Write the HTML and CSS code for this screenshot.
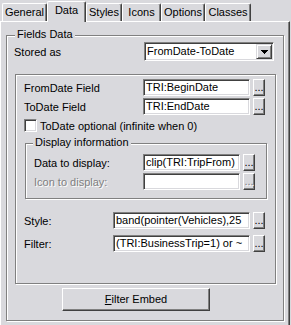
FILE: index.html
```html
<!DOCTYPE html>
<html lang="en">
<head>
    <meta charset="UTF-8">
    <title>Data</title>
    <link rel="stylesheet" href="styles.css">
</head>
<body>

<div class="dialog">
    <!-- Tab strip -->
    <div class="tabs">
        <div class="tab tab-general">General</div>
        <div class="tab tab-data active">Data</div>
        <div class="tab tab-styles">Styles</div>
        <div class="tab tab-icons">Icons</div>
        <div class="tab tab-options">Options</div>
        <div class="tab tab-classes">Classes</div>
    </div>

    <div class="panel">
        <div class="group fields">
            <span class="group-title">Fields Data</span>

            <div class="row stored">
                <span class="lab">Stored as</span>
                <div class="field select">
                    <span class="select-text">FromDate-ToDate</span>
                    <span class="drop">
                        <svg width="7" height="4" viewBox="0 0 7 4" shape-rendering="crispEdges"><path d="M0 0h7v1h-1v1h-1v1h-1v1h-1v-1h-1v-1h-1v-1h-1z" fill="#000"/></svg>
                    </span>
                </div>
            </div>

            <div class="box">
                <div class="row">
                    <span class="lab lab-main">FromDate Field</span>
                    <div class="field field-main">TRI:BeginDate</div>
                    <div class="btn dots">...</div>
                </div>
                <div class="row gap2">
                    <span class="lab lab-main">ToDate Field</span>
                    <div class="field field-main">TRI:EndDate</div>
                    <div class="btn dots">...</div>
                </div>
                <div class="row check-row">
                    <span class="check"></span>
                    <span class="check-text">ToDate optional (infinite when 0)</span>
                </div>

                <div class="group display">
                    <span class="group-title">Display information</span>
                    <div class="row">
                        <span class="lab lab-disp">Data to display:</span>
                        <div class="field field-disp">clip(TRI:TripFrom)</div>
                        <div class="btn dots">...</div>
                    </div>
                    <div class="row gap2">
                        <span class="lab lab-disp disabled">Icon to display:</span>
                        <div class="field field-disp"></div>
                        <div class="btn dots disabled">...</div>
                    </div>
                </div>

                <div class="row style-row">
                    <span class="lab lab-short">Style:</span>
                    <div class="field field-wide">band(pointer(Vehicles),25</div>
                    <div class="btn dots">...</div>
                </div>
                <div class="row filter-row">
                    <span class="lab lab-short">Filter:</span>
                    <div class="field field-wide">(TRI:BusinessTrip=1) or ~</div>
                    <div class="btn dots">...</div>
                </div>
            </div>

            <div class="btn embed"><u>F</u>ilter Embed</div>
        </div>
    </div>
</div>

</body>
</html>
```

FILE: styles.css
```css
body {
    margin: 0;
    background: #d9d9dd;
    font-family: "Liberation Sans", Arial, sans-serif;
    font-size: 11px;
    color: #000;
}
.dialog {
    width: 291px;
    height: 325px;
    overflow: hidden;
}

/* tabs */
.tabs {
    display: flex;
    align-items: flex-end;
    height: 21px;
    padding-left: 2px;
}
.tab {
    box-sizing: border-box;
    height: 18px;
    padding-top: 2px;
    text-align: center;
    line-height: 13px;
    border: 1px solid;
    border-color: #fff #404040 transparent #fff;
    border-bottom: 0;
    border-radius: 2px 2px 0 0;
    box-shadow: inset -1px 0 #808080;
    background: #d9d9dd;
}
.tab.active {
    height: 21px;
    margin-bottom: -1px;
    position: relative;
    z-index: 1;
}
.tab-general { width: 45px; }
.tab-data { width: 39px; }
.tab-styles { width: 36px; }
.tab-icons { width: 39px; }
.tab-options { width: 44px; }
.tab-classes { width: 46px; }

.panel {
    box-sizing: border-box;
    width: 290px;
    height: 310px;
    padding: 13px 0 0 5px;
    border-top: 1px solid #fff;
    border-left: 1px solid #fff;
    border-right: 1px solid #404040;
    box-shadow: inset -1px 0 #808080;
}

/* etched group boxes */
.group {
    position: relative;
    box-sizing: border-box;
    border: 1px solid #808080;
    box-shadow: inset 1px 1px #fff, 1px 1px #fff;
}
.group-title {
    position: absolute;
    top: -8px;
    left: 8px;
    padding: 0 2px;
    line-height: 13px;
    background: #d9d9dd;
}
.fields {
    width: 278px;
    padding-bottom: 9px;
}
.display {
    width: 242px;
    height: 56px;
    margin: 11px 0 0 1px;
    padding: 10px 0 0 8px;
}
.display .group-title {
    left: 7px;
}

.box {
    box-sizing: border-box;
    width: 261px;
    height: 210px;
    margin: 13px 0 0 8px;
    padding: 4px 0 0 8px;
    border: 1px solid #808080;
    box-shadow: inset 1px 1px #fff, 1px 1px #fff;
}

/* rows */
.row {
    display: flex;
    align-items: center;
    height: 17px;
}
.gap2 { margin-top: 2px; }
.stored {
    height: 19px;
    margin: 6px 0 0 7px;
}
.stored .lab { width: 130px; }
.lab-main { width: 119px; }
.lab-disp { width: 109px; }
.lab-short { width: 89px; }
.style-row { margin-top: 13px; }
.filter-row { margin-top: 6px; }

.disabled {
    color: #808080;
    text-shadow: 1px 1px #fff;
}

/* sunken fields */
.field {
    box-sizing: border-box;
    height: 17px;
    padding: 0 2px;
    line-height: 15px;
    white-space: nowrap;
    overflow: hidden;
    background: #fff;
    border: 1px solid;
    border-color: #808080 #fff #fff #808080;
    box-shadow: inset 1px 1px #404040, inset -1px -1px #d9d9dd;
}
.field-main { width: 107px; }
.field-disp { width: 97px; }
.field-wide { width: 137px; }

.select {
    display: flex;
    align-items: center;
    width: 130px;
    height: 19px;
    padding: 0 1px 0 2px;
}
.select-text {
    flex: 1;
}
.drop {
    box-sizing: border-box;
    display: flex;
    align-items: center;
    justify-content: center;
    width: 16px;
    height: 15px;
    background: #d9d9dd;
    border: 1px solid;
    border-color: #d9d9dd #404040 #404040 #d9d9dd;
    box-shadow: inset 1px 1px #fff, inset -1px -1px #808080;
}

/* raised buttons */
.btn {
    box-sizing: border-box;
    text-align: center;
    background: #d9d9dd;
    border: 1px solid;
    border-color: #fff #404040 #404040 #fff;
    box-shadow: inset -1px -1px #808080;
}
.dots {
    width: 12px;
    height: 17px;
    margin-left: 3px;
    line-height: 15px;
}
.embed {
    width: 148px;
    height: 23px;
    margin: 4px 0 0 55px;
    line-height: 21px;
}

/* checkbox */
.check-row {
    height: 13px;
    margin-top: 4px;
}
.check {
    box-sizing: border-box;
    width: 13px;
    height: 13px;
    background: #fff;
    border: 1px solid;
    border-color: #808080 #fff #fff #808080;
    box-shadow: inset 1px 1px #404040, inset -1px -1px #d9d9dd;
}
.check-text {
    margin-left: 3px;
}
```
